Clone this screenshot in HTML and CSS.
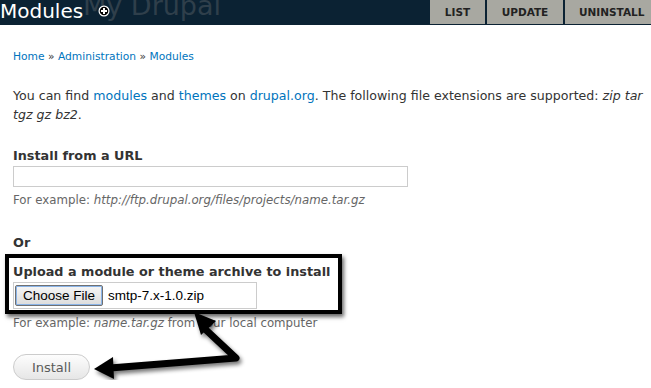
FILE: index.html
```html
<!DOCTYPE html>
<html lang="en">

<head>
    <meta charset="UTF-8">
    <title>Modules | My Drupal</title>
    <link rel="stylesheet" href="styles.css">
</head>

<body>

    <div class="header">
        <div class="branding">
            <span class="site-name">My Drupal</span>
            <h1 class="page-title">Modules</h1>
            <span class="add-icon">
                <svg width="12" height="12" viewBox="0 0 12 12">
                    <circle cx="6" cy="6" r="5.5" fill="#fff"/>
                    <circle cx="6" cy="6" r="4.3" fill="#000"/>
                    <path d="M6 3v6M3 6h6" stroke="#fff" stroke-width="2"/>
                </svg>
            </span>
        </div>
        <ul class="tabs">
            <li class="tab-list">LIST</li>
            <li class="tab-update">UPDATE</li>
            <li class="tab-uninstall">UNINSTALL</li>
        </ul>
    </div>

    <div class="page">
        <div class="breadcrumb">
            <a href="#">Home</a> &raquo; <a href="#">Administration</a> &raquo; <a href="#">Modules</a>
        </div>

        <p class="intro">You can find <a href="#">modules</a> and <a href="#">themes</a> on <a href="#">drupal.org</a>. The following file extensions are supported: <em>zip tar tgz gz bz2</em>.</p>

        <div class="form-item url">
            <label>Install from a URL</label>
            <input type="text" class="url-input">
            <div class="description">For example: <em>http://ftp.drupal.org/files/projects/name.tar.gz</em></div>
        </div>

        <div class="or">Or</div>

        <div class="form-item upload">
            <label>Upload a module or theme archive to install</label>
            <div class="file-input"><span class="file-button">Choose File</span><span class="file-name">smtp-7.x-1.0.zip</span></div>
            <div class="description">For example: <em>name.tar.gz</em> from your local computer</div>
            <div class="highlight"></div>
        </div>

        <button class="install">Install</button>

        <!-- annotation arrow -->
        <svg class="arrow" width="260" height="100" viewBox="0 0 260 100">
            <defs>
                <filter id="shadow" x="-20%" y="-20%" width="140%" height="140%">
                    <feGaussianBlur in="SourceAlpha" stdDeviation="2"/>
                    <feOffset dx="2" dy="3"/>
                    <feComponentTransfer><feFuncA type="linear" slope="0.55"/></feComponentTransfer>
                    <feMerge><feMergeNode/><feMergeNode in="SourceGraphic"/></feMerge>
                </filter>
            </defs>
            <g filter="url(#shadow)">
                <path d="M205 29 L236 58 L110 68" fill="none" stroke="#000" stroke-width="7" stroke-linejoin="round"/>
                <path d="M194 12 L216 21 L201 35 Z" fill="#000"/>
                <path d="M94 69 L113 57 L114 79 Z" fill="#000"/>
            </g>
        </svg>
    </div>

</body>

</html>
```

FILE: styles.css
```css
body {
    margin: 0;
    font-family: "DejaVu Sans", Verdana, sans-serif;
    font-size: 12px;
    color: #333;
    background: #fff;
}

a {
    color: #0074bd;
    text-decoration: none;
}

.header {
    display: flex;
    justify-content: space-between;
    height: 25px;
    background: #0b2233;
    overflow: hidden;
}

.branding {
    position: relative;
    display: flex;
    align-items: center;
    height: 25px;
}

.site-name {
    position: absolute;
    left: 83px;
    top: -10px;
    font-size: 27px;
    color: #2f3f4b;
    white-space: nowrap;
}

.page-title {
    position: relative;
    margin: -3px 0 0;
    font-size: 20px;
    font-weight: normal;
    color: #fff;
    line-height: 25px;
}

.add-icon {
    position: relative;
    display: flex;
    margin-left: 15px;
    margin-top: -3px;
}

.tabs {
    display: flex;
    gap: 2px;
    margin: 0;
    padding: 0;
    list-style: none;
    height: 24px;
}

.tabs li {
    background: #a8a8a1;
    color: #222;
    font-size: 10.5px;
    font-weight: bold;
    line-height: 24px;
    text-align: center;
    white-space: nowrap;
}

.tab-list {
    width: 55px;
}

.tab-update {
    width: 76px;
}

.tab-uninstall {
    width: 86px;
    box-sizing: border-box;
    padding-left: 14px;
    text-align: left !important;
}

.page {
    position: relative;
    padding: 25px 4px 0 13px;
}

.breadcrumb {
    font-size: 10.7px;
    line-height: 14px;
}

.intro {
    font-size: 12.6px;
    line-height: 19px;
    margin: 22px 0 0;
}

.form-item label {
    display: block;
    font-weight: bold;
    font-size: 12.8px;
    line-height: 16px;
}

.url {
    margin-top: 24px;
}

.url-input {
    display: block;
    box-sizing: border-box;
    width: 395px;
    height: 21px;
    margin: 2px 0 0;
    border: 1px solid #ccc;
}

.description {
    font-size: 11.8px;
    line-height: 14px;
    color: #666;
    margin-top: 6px;
}

.or {
    font-weight: bold;
    font-size: 12.8px;
    line-height: 16px;
    margin-top: 28px;
}

.upload {
    position: relative;
    margin-top: 13px;
}

.file-input {
    display: flex;
    align-items: center;
    box-sizing: border-box;
    width: 244px;
    height: 27px;
    margin-top: 2px;
    border: 1px solid #ccc;
    font-family: "Liberation Sans", Arial, sans-serif;
    font-size: 13.5px;
    color: #000;
}

.file-button {
    margin-left: 1px;
    padding: 2px 7px;
    background: linear-gradient(#f6f6f6, #dcdcdc);
    border: 1px solid #707070;
    border-radius: 2px;
    box-shadow: inset 0 0 0 1px #8ab4e8;
}

.file-name {
    margin-left: 5px;
}

.upload .description {
    margin-top: 7px;
}

.highlight {
    position: absolute;
    left: -8px;
    top: -10px;
    box-sizing: border-box;
    width: 337px;
    height: 60px;
    border: 4px solid #000;
    box-shadow: 2px 3px 4px rgba(0, 0, 0, 0.6);
}

.install {
    display: block;
    margin-top: 24px;
    width: 77px;
    height: 26px;
    border: 1px solid #ccc;
    border-radius: 13px;
    background: linear-gradient(#fdfdfd, #e6e6e6);
    font-family: "DejaVu Sans", Verdana, sans-serif;
    font-size: 13px;
    color: #5a5a5a;
}

.arrow {
    position: absolute;
    left: 0;
    top: 275px;
}
```
